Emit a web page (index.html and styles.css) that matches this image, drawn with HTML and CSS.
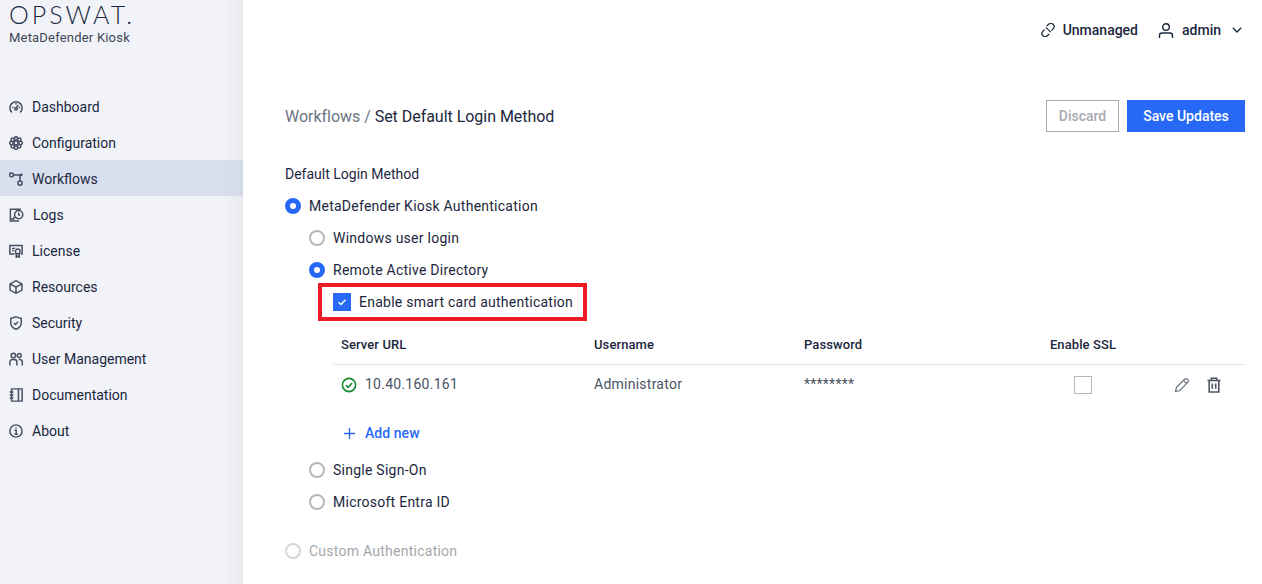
FILE: index.html
```html
<!DOCTYPE html>
<html lang="en">
<head>
<meta charset="utf-8">
<title>MetaDefender Kiosk</title>
<link rel="stylesheet" href="styles.css">
</head>
<body>
<div class="app">
  <aside class="sidebar">
    <div class="brand">
      <div class="logo">OPSWAT.</div>
      <div class="product">MetaDefender Kiosk</div>
    </div>
    <nav class="nav">
      <a class="nav-item"><svg class="nav-icon" viewBox="0 0 16 16"><path d="M3.300 14.200A7 7 0 1 1 12.700 14.200"/><path d="M8 9 10.500 5.500"/><circle cx="8" cy="10" r="1.500"/><path d="M3.500 8.500H5M11 8.500H12.500M8 3.500V5"/></svg><span>Dashboard</span></a>
      <a class="nav-item"><svg class="nav-icon" viewBox="0 0 16 16"><circle cx="8" cy="8" r="2.200"/><circle cx="8" cy="2.700" r="1.900"/><circle cx="8" cy="13.300" r="1.900"/><circle cx="2.700" cy="8" r="1.900"/><circle cx="13.300" cy="8" r="1.900"/><circle cx="4.250" cy="4.250" r="1.900"/><circle cx="11.750" cy="4.250" r="1.900"/><circle cx="4.250" cy="11.750" r="1.900"/><circle cx="11.750" cy="11.750" r="1.900"/></svg><span>Configuration</span></a>
      <a class="nav-item active"><svg class="nav-icon" viewBox="0 0 16 16"><circle cx="2.800" cy="3.300" r="2.200"/><circle cx="12.500" cy="12.700" r="2.400"/><circle cx="14" cy="3.300" r=".8"/><path d="M5 3.300H14M12.500 3.300V10.300"/></svg><span>Workflows</span></a>
      <a class="nav-item logs"><svg class="nav-icon wide" viewBox="0 0 16 16"><path d="M13 1.500H1V14.800H11"/><circle cx="10.500" cy="7.500" r="4.700"/><path d="M10.500 5V7.700L12.100 8.700"/><path d="M1 12.500H5V10"/></svg><span>Logs</span></a>
      <a class="nav-item"><svg class="nav-icon" viewBox="0 0 16 16"><path d="M6.500 11.500H1V1.800H15V11.500H13.500"/><path d="M3.500 5H7M3.500 7.500H5.500"/><circle cx="10" cy="8.500" r="2.700"/><path d="M8.300 10.500V15.200L10 14 11.700 15.200V10.500"/></svg><span>License</span></a>
      <a class="nav-item"><svg class="nav-icon" viewBox="0 0 16 16"><path d="M8 .8 14.800 4.500V11.500L8 15.200 1.200 11.500V4.500Z"/><path d="M1.200 4.500 8 8.200 14.800 4.500M8 8.200V15.200"/></svg><span>Resources</span></a>
      <a class="nav-item"><svg class="nav-icon" viewBox="0 0 16 16"><path d="M8 1 14 3V8C14 11.500 11.500 13.800 8 15.200 4.500 13.800 2 11.500 2 8V3Z"/><path d="M5.500 8 7.300 9.700 10.500 6.500"/></svg><span>Security</span></a>
      <a class="nav-item"><svg class="nav-icon" viewBox="0 0 16 16"><circle cx="5" cy="4" r="2.600"/><circle cx="11.700" cy="4" r="2.200"/><path d="M1 15.500V11.500A3 3 0 0 1 4 8.500H6A3 3 0 0 1 9 11.500V15.500"/><path d="M11 8.500H12.500A3 3 0 0 1 15.200 11.500V15.500"/></svg><span>User Management</span></a>
      <a class="nav-item"><svg class="nav-icon" viewBox="0 0 16 16"><path d="M3 1H15V15H3Z"/><path d="M10.800 1V15"/><path d="M.8 4.500H5M.8 8H5M.8 11.500H5"/></svg><span>Documentation</span></a>
      <a class="nav-item"><svg class="nav-icon" viewBox="0 0 16 16"><circle cx="8" cy="8" r="7"/><path d="M6.300 7.200H8.200V11.700M6.300 11.700H10"/><path d="M7.300 4.600H8.700"/></svg><span>About</span></a>
    </nav>
  </aside>
  <main class="main">
    <header class="topbar">
      <span class="top-item"><svg class="top-icon link" viewBox="0 0 16 16"><path d="M6.500 3.500 8.500 1.700A3.300 3.300 0 0 1 14 6.500L12 8.800"/><path d="M9.500 12.500 7.500 14.300A3.300 3.300 0 0 1 2 9.500L4 7.200"/><path d="M5.500 5 11 10.500"/></svg>Unmanaged</span>
      <span class="top-item user"><svg class="top-icon person" viewBox="0 0 16 16"><circle cx="8" cy="4.500" r="3.300"/><path d="M1.500 15.500V13A2.500 2.500 0 0 1 4 10.500H12A2.500 2.500 0 0 1 14.500 13V15.500"/></svg>admin<svg class="chevron" viewBox="0 0 10 6"><path d="M.8.800 5 5 9.200.8"/></svg></span>
    </header>
    <section class="title-row">
      <h1 class="crumbs"><span class="crumb-root">Workflows /</span> Set Default Login Method</h1>
      <div class="actions">
        <button class="btn btn-discard">Discard</button>
        <button class="btn btn-save">Save Updates</button>
      </div>
    </section>
    <p class="field-label">Default Login Method</p>
    <div class="option"><span class="radio on"></span>MetaDefender Kiosk Authentication</div>
    <div class="sub">
      <div class="option"><span class="radio"></span>Windows user login</div>
      <div class="option"><span class="radio on"></span>Remote Active Directory</div>
      <div class="nested">
        <div class="smart">
          <span class="check"><svg viewBox="0 0 18 18"><path d="M5.500 9.300 8 11.600 12.500 6.800"/></svg></span>Enable smart card authentication
        </div>
        <div class="table">
          <div class="cell head">Server URL</div>
          <div class="cell head">Username</div>
          <div class="cell head">Password</div>
          <div class="cell head center">Enable SSL</div>
          <div class="cell head"></div>
          <div class="cell body"><svg class="ok" viewBox="0 0 16 16"><circle cx="8" cy="8" r="6.600"/><path d="M5 8.200 7.200 10.300 11.200 6"/></svg><span class="val">10.40.160.161</span></div>
          <div class="cell body"><span class="val">Administrator</span></div>
          <div class="cell body"><span class="val">********</span></div>
          <div class="cell body center"><span class="ssl"></span></div>
          <div class="cell body tools">
            <svg class="tool pencil" viewBox="0 0 16 16"><path d="M1.500 14.500 2.500 10.200 10.800 2A1.500 1.500 0 0 1 13 2L14 3A1.500 1.500 0 0 1 14 5.200L5.800 13.500Z"/><path d="M9.500 3.300 12.700 6.500"/></svg>
            <svg class="tool trash" viewBox="0 0 16 16"><path d="M1.500 3.500H14.500"/><path d="M5.300 3.500V1.200H10.700V3.500"/><path d="M3.200 3.500V15H12.800V3.500"/><path d="M6.300 6.500V11.800M9.700 6.500V11.800"/></svg>
          </div>
        </div>
        <a class="add"><svg class="plus" viewBox="0 0 14 14"><path d="M7 1V13M1 7H13"/></svg>Add new</a>
      </div>
      <div class="option"><span class="radio"></span>Single Sign-On</div>
      <div class="option"><span class="radio"></span>Microsoft Entra ID</div>
    </div>
    <div class="option disabled"><span class="radio"></span>Custom Authentication</div>
  </main>
</div>
</body>
</html>
```
FILE: styles.css
```css
* { box-sizing: border-box; }
html, body { margin: 0; height: 100%; overflow: hidden; }
body { font-family: Roboto, "Liberation Sans", sans-serif; font-size: 14px; color: #1b273d; background: #fff; letter-spacing: .25px; }
.app { display: flex; height: 584px; }
.sidebar { width: 243px; flex: none; background: linear-gradient(90deg, #f1f3f9 92%, #e9eaef 100%); }
.brand { height: 88px; padding: 0 0 0 9px; }
.logo { font-family: Lato, sans-serif; font-weight: 300; font-size: 25px; line-height: 29px; letter-spacing: 3px; color: #1b2a42; height: 30px; }
.product { font-size: 13px; line-height: 15px; color: #3d4657; letter-spacing: .2px; }
.nav-item { display: flex; align-items: center; height: 36px; padding: 2px 0 0 9px; gap: 9px; color: #1b273d; letter-spacing: 0; }
.nav-item.active { background: linear-gradient(90deg, #d9dfef 92%, #d3d9e9 100%); }
.nav-icon { width: 14px; height: 14px; flex: none; fill: none; stroke: #454f60; stroke-width: 1.700; }
.nav-icon.wide { width: 15px; }
.main { flex: 1; min-width: 0; padding: 0 17px 0 42px; }
.topbar { height: 60px; display: flex; justify-content: flex-end; align-items: center; gap: 20px; font-weight: 500; padding-right: 3px; letter-spacing: 0; }
.top-item { display: flex; align-items: center; gap: 8px; }
.top-icon { fill: none; stroke: #1b273d; stroke-width: 1.400; }
.link { width: 14px; height: 14px; }
.person { width: 16px; height: 17px; }
.chevron { width: 10px; height: 6px; margin-left: 3px; fill: none; stroke: #1b273d; stroke-width: 1.300; }
.title-row { display: flex; justify-content: space-between; align-items: center; height: 32px; margin-top: 40px; }
.crumbs { margin: 0; font-size: 16px; font-weight: 400; letter-spacing: -.03px; color: #1b273d; }
.crumb-root { color: #6c7483; }
.actions { display: flex; gap: 8px; }
.btn { font: 500 14px Roboto, sans-serif; height: 32px; border: 0; padding: 0; }
.btn-discard { width: 73px; background: #fff; border: 1px solid #a8abb1; color: #a8abb1; }
.btn-save { width: 118px; background: #2768f6; color: #fff; }
.field-label { margin: 32px 0 0; height: 20px; line-height: 20px; letter-spacing: 0; }
.option { display: flex; align-items: center; gap: 8px; height: 32px; }
.field-label + .option { margin-top: 6px; }
.radio { width: 16px; height: 16px; border-radius: 50%; border: 2px solid #b5b7bb; flex: none; background: #fff; }
.radio.on { border: 5px solid #2768f6; }
.sub { padding-left: 24px; }
.nested { padding-left: 24px; }
.smart { display: flex; align-items: center; gap: 8px; height: 38px; width: 269px; margin: -3px 0 0 -15px; padding-left: 11px; border: 4px solid #ed1c24; }
.check { width: 18px; height: 18px; background: #2768f6; flex: none; }
.check svg { display: block; fill: none; stroke: #fff; stroke-width: 1.400; }
.table { display: grid; grid-template-columns: 253px 210px 205px 164px 80px; margin-top: 4px; }
.cell { display: flex; align-items: center; padding-left: 8px; }
.head { height: 40px; font-size: 13px; font-weight: 500; border-bottom: 1px solid #dfe1e4; letter-spacing: .1px; }
.body { height: 39px; color: #4a5362; }
.val { padding-bottom: 2px; }
.center { justify-content: center; padding-left: 0; }
.ok { width: 16px; height: 16px; margin-right: 8px; fill: none; stroke: #14892e; stroke-width: 1.600; }
.ssl { width: 18px; height: 18px; border: 1px solid #b5b7bb; background: #fff; }
.tools { gap: 16px; padding-left: 9px; }
.tool { width: 16px; height: 16px; fill: none; }
.pencil { stroke: #6a717c; stroke-width: 1.200; }
.trash { stroke: #4f5663; stroke-width: 1.600; }
.add { display: flex; align-items: center; gap: 9px; height: 32px; margin: 13px 0 5px 10px; color: #2768f6; font-weight: 500; letter-spacing: .05px; }
.plus { width: 13px; height: 13px; fill: none; stroke: #2768f6; stroke-width: 1.400; }
.disabled { margin-top: 17px; color: #a3a7ad; }
.disabled .radio { border-color: #d5d6d9; }
```
